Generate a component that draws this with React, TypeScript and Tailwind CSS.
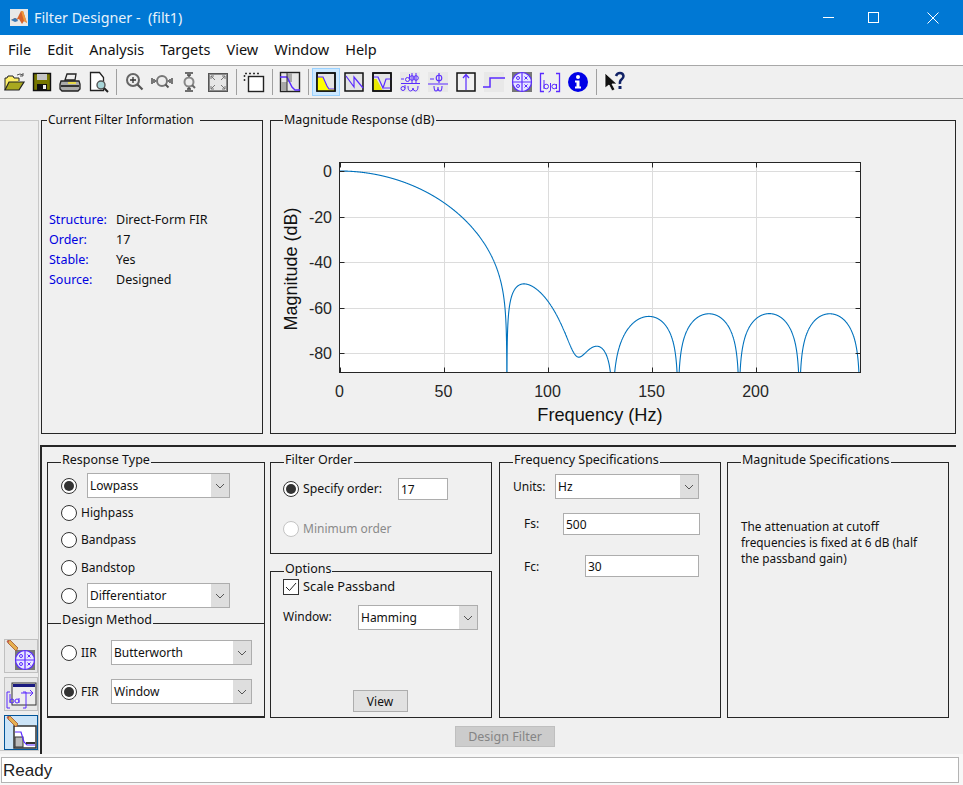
import React from "react";

const Svg = ({ children, w = 24, h = 24 }: { children: React.ReactNode; w?: number; h?: number }) => (
  <svg width={w} height={h} viewBox={`0 0 ${w} ${h}`} className="block shrink-0">{children}</svg>
);

const P = "#5a2bff";

const IOpen = () => (<Svg>
  <path d="M3 20V8h2l1-2h5l1 2h5v3" fill="#fff06a" stroke="#222" strokeWidth="1" />
  <path d="M3 20l4-8h15l-5 8z" fill="#a9a820" stroke="#222" strokeWidth="1.2" />
  <path d="M15 5q3-2 6 0M21 3v3h-3" fill="none" stroke="#555" strokeWidth="1" />
</Svg>);
const ISave = () => (<Svg>
  <path d="M3.500 3.500h17v17h-17z" fill="#777700" stroke="#111" strokeWidth="1.4" />
  <rect x="7" y="4" width="10" height="6" fill="#c5c5c5" />
  <rect x="7" y="14" width="10" height="6" fill="#111" />
  <rect x="13" y="15" width="3" height="4" fill="#eee" />
</Svg>);
const IPrint = () => (<Svg>
  <path d="M7 10l2-6h9l-1 6z" fill="#eee" stroke="#222" strokeWidth="1.300" />
  <path d="M3 11h18l1 3v5l-2 2H4l-2-2v-5z" fill="#aaa" stroke="#222" strokeWidth="1.300" />
  <rect x="3" y="15" width="18" height="2" fill="#333" />
  <rect x="10" y="12" width="8" height="2" fill="#e8d94a" />
</Svg>);
const IPreview = () => (<Svg>
  <path d="M4.500 2.500h9l4 5v13h-13z" fill="#fff" stroke="#222" strokeWidth="1.300" />
  <circle cx="15" cy="15" r="4" fill="#a7d5d8" stroke="#555" strokeWidth="1.4" />
  <path d="M18 18l4 4" stroke="#222" strokeWidth="2" />
</Svg>);
const IZoomIn = () => (<Svg>
  <circle cx="11" cy="10" r="6" fill="#eee" stroke="#666" strokeWidth="2" />
  <path d="M8 10h6M11 7v6" stroke="#333" strokeWidth="1.3" />
  <path d="M15.500 14.500l5 5" stroke="#555" strokeWidth="2.200" />
</Svg>);
const IZoomX = () => (<Svg>
  <circle cx="12" cy="11" r="5" fill="#eee" stroke="#777" strokeWidth="2" />
  <path d="M15.500 14.500l3 3" stroke="#555" strokeWidth="2" />
  <path d="M2 8v6M4 9v4M6 11H5M22 8v6M20 9v4M18 11h1" stroke="#444" strokeWidth="1.4" />
</Svg>);
const IZoomY = () => (<Svg>
  <circle cx="11" cy="12" r="4.500" fill="#eee" stroke="#888" strokeWidth="2" />
  <path d="M14 15l3 3" stroke="#666" strokeWidth="2" />
  <path d="M7 3h8M9 5h4M7 21h8M9 19h4M11 5v2M11 17v2" stroke="#444" strokeWidth="1.3" />
</Svg>);
const IFit = () => (<Svg>
  <rect x="2.500" y="3.500" width="19" height="18" fill="#8a8a8a" stroke="#555" />
  <rect x="4" y="5" width="16" height="15" fill="#e6e6e6" />
  <path d="M5 6l4 4M5 6h3M5 6v3M19 6l-4 4M19 6h-3M19 6v3M5 19l4-4M5 19h3M5 19v-3M19 19l-4-4M19 19h-3M19 19v-3" stroke="#777" strokeWidth="1" fill="none" />
</Svg>);
const INew = () => (<Svg>
  <rect x="6.500" y="6.500" width="15" height="15" fill="#fff" stroke="#222" strokeWidth="1.400" />
  <path d="M2.500 11V3.500H17" fill="none" stroke="#333" strokeWidth="1.500" strokeDasharray="2 2" />
</Svg>);
const ISpec = () => (<Svg>
  <rect x="2.500" y="2.500" width="19" height="19" fill="#e6e6e6" stroke="#222" strokeWidth="1.400" />
  <rect x="3" y="12" width="6" height="9" fill="#a8a8a8" />
  <rect x="9" y="3" width="5" height="9" fill="#a8a8a8" />
  <path d="M2 7h7l5 10 3 3h5" fill="none" stroke={P} strokeWidth="1.400" />
  <path d="M9 3v18" stroke="#333" />
</Svg>);
const IMag = () => (<Svg>
  <rect x="3" y="3" width="18" height="18" fill="#e4e4e4" stroke="#111" strokeWidth="1.500" />
  <path d="M3.500 7h5l4 8 2 4h6v2H3.500z" fill="#ffff00" />
  <path d="M3 7h6l4 9 2 3h6" fill="none" stroke={P} strokeWidth="1.200" />
  <rect x="3" y="3" width="18" height="18" fill="none" stroke="#111" strokeWidth="1.500" />
</Svg>);
const IPhase = () => (<Svg>
  <rect x="3" y="3" width="18" height="18" fill="#e4e4e4" stroke="#111" strokeWidth="1.500" />
  <path d="M4 6l8 11V7l9 11" fill="none" stroke={P} strokeWidth="1.200" />
</Svg>);
const IMagPhase = () => (<Svg>
  <rect x="3" y="3" width="18" height="18" fill="#e4e4e4" stroke="#111" strokeWidth="1.500" />
  <path d="M3.500 9h3l6 11h-9z" fill="#e8e800" />
  <path d="M3 7h5l5 11 3-9h6M14 18h7" fill="none" stroke={P} strokeWidth="1.200" />
  <rect x="3" y="3" width="18" height="18" fill="none" stroke="#111" strokeWidth="1.500" />
</Svg>);
const IGroup = () => (<Svg>
  <rect x="2" y="2" width="20" height="20" fill="#e8e8e8" />
  <path d="M3 9h3M3 13.500h19" stroke={P} strokeWidth="1.200" />
  <path d="M14 3v10M18 3v10" stroke={P} strokeWidth="1" />
  <circle cx="14" cy="8" r="2.300" fill="none" stroke={P} strokeWidth="1" />
  <circle cx="18" cy="8" r="2.300" fill="none" stroke={P} strokeWidth="1" />
  <circle cx="9.500" cy="9.500" r="2" fill="none" stroke={P} strokeWidth="1" />
  <path d="M11.500 9.500V4" stroke={P} strokeWidth="1" />
  <circle cx="5" cy="18.500" r="2" fill="none" stroke={P} strokeWidth="1" />
  <path d="M7 18.500V15M10 16q0 5 2.500 5t2.500-3q0 3 2.500 3T20 16" fill="none" stroke={P} strokeWidth="1" />
</Svg>);
const IPhaseDelay = () => (<Svg>
  <rect x="2" y="2" width="20" height="20" fill="#e8e8e8" />
  <path d="M4 9h4M2 14h20M13 3v10" stroke={P} strokeWidth="1.200" />
  <circle cx="13" cy="8" r="2.800" fill="none" stroke={P} strokeWidth="1.100" />
  <path d="M8 16q0 5 2 5t2-4q0 4 2 4t2-5" fill="none" stroke={P} strokeWidth="1.100" />
</Svg>);
const IImpulse = () => (<Svg>
  <rect x="3" y="3" width="18" height="18" fill="#f0f0f0" stroke="#111" strokeWidth="1.500" />
  <path d="M12 4v16M9 8l3-3.500L15 8" fill="none" stroke={P} strokeWidth="1.200" />
</Svg>);
const IStep = () => (<Svg>
  <rect x="2" y="2" width="20" height="20" fill="#e8e8e8" />
  <path d="M1 17h7V8h15" fill="none" stroke={P} strokeWidth="1.500" />
</Svg>);
const IPoleZero = ({ s = 24 }: { s?: number }) => (<Svg w={s} h={s}>
  <g transform={`scale(${s / 24})`}>
    <rect x="2" y="2" width="20" height="20" fill="#777" />
    <circle cx="12" cy="12" r="9.500" fill="#e8e8ff" stroke={P} strokeWidth="1.200" />
    <path d="M2.500 12h19M12 2.500v19" stroke={P} strokeWidth="1.200" />
    <circle cx="8" cy="8" r="1.500" fill="none" stroke={P} />
    <circle cx="8" cy="16" r="1.500" fill="none" stroke={P} />
    <path d="M14.500 6.500l3 3M17.500 6.500l-3 3M14.500 14.500l3 3M17.500 14.500l-3 3" stroke={P} />
  </g>
</Svg>);
const ICoef = () => (<Svg>
  <path d="M6 3.500H2.500v18H6M18 3.500h3.500v18H18" fill="none" stroke={P} strokeWidth="1.300" />
  <path d="M6 10v9M12.500 13v7q0 2-2 2M18.500 14v5" fill="none" stroke={P} strokeWidth="1" />
  <circle cx="8.200" cy="16.500" r="2.300" fill="none" stroke={P} strokeWidth="1" />
  <circle cx="16.200" cy="16.500" r="2.300" fill="none" stroke={P} strokeWidth="1" />
</Svg>);
const IInfo = () => (<Svg>
  <circle cx="12" cy="12" r="10" fill="#0000e6" />
  <circle cx="12" cy="7" r="2" fill="#fff" />
  <path d="M9 10.500h4.500V16.500H15v2H9v-2h1.500v-4H9z" fill="#fff" />
</Svg>);
const IHelp = () => (<Svg>
  <path d="M3 3l0 15 4-3 3 6 3-1.500-3-5.500h5z" fill="#111" stroke="#fff" strokeWidth="0.800" />
  <path d="M14 6q1-3 4-3t3.500 3q0 2-2 3.500T18 14" fill="none" stroke="#112266" strokeWidth="2.500" />
  <rect x="16.500" y="16" width="3" height="3" fill="#112266" />
</Svg>);

const Btn = ({ children, active }: { children: React.ReactNode; active?: boolean }) => (
  <div className={active
    ? "w-[28px] h-[28px] flex items-center justify-center bg-[#cce8ff] border border-[#99d1ff]"
    : "w-[28px] h-[28px] flex items-center justify-center"}>{children}</div>
);
const Sep = () => <div className="w-px h-[26px] bg-[#a0a0a0] ml-[4px] mr-[3px]" />;

const Group = ({ title, className, legend = "-top-[12px] left-[13px]", children }: { title: string; className: string; legend?: string; children?: React.ReactNode }) => (
  <div className={"relative border border-[#262626] " + className}>
    <span className={"absolute bg-[#f0f0f0] px-px h-[18px] leading-[18px] whitespace-nowrap text-[12.5px] " + legend}>{title}</span>
    {children}
  </div>
);

const Radio = ({ on, disabled }: { on?: boolean; disabled?: boolean }) => (
  <span className={"w-[16px] h-[16px] rounded-full border bg-white flex items-center justify-center shrink-0 " + (disabled ? "border-[#c4c4c4]" : "border-[#333]")}>
    {on && <span className="w-[10px] h-[10px] rounded-full bg-[#333]" />}
  </span>
);

const Select = ({ value, className }: { value: string; className: string }) => (
  <div className={"flex h-[25px] bg-white border border-[#adadad] " + className}>
    <span className="flex-1 pl-[2px] leading-[24px] text-[#111]">{value}</span>
    <span className="w-[18px] bg-[#dedede] flex items-center justify-center">
      <svg width="10" height="6" viewBox="0 0 10 6"><path d="M1 1l4 4 4-4" fill="none" stroke="#555" /></svg>
    </span>
  </div>
);

const Input = ({ value, className }: { value: string; className: string }) => (
  <div className={"bg-white border border-[#adadad] pl-[2px] leading-[21px] text-[#111] " + className}>{value}</div>
);

const L = 68.5, R = 589.5, T = 41.5, B = 251.5;
const SX = 2.0816, SY = 2.28, Y0 = 50;

function curvePath() {
  const N = 17, wn = 30 / 250;
  const h: number[] = [];
  for (let n = 0; n <= N; n++) {
    const t = n - N / 2;
    const w = 0.54 - 0.46 * Math.cos((2 * Math.PI * n) / N);
    h.push((Math.sin(Math.PI * wn * t) / (Math.PI * t)) * w);
  }
  const sum = h.reduce((a, b) => a + b, 0);
  let d = "";
  for (let f = 0; f <= 250; f += 0.05) {
    const om = (2 * Math.PI * f) / 500;
    let re = 0, im = 0;
    h.forEach((v, n) => { re += (v / sum) * Math.cos(om * n); im += (v / sum) * Math.sin(om * n); });
    const db = 20 * Math.log10(Math.max(Math.hypot(re, im), 1e-7));
    const x = L + f * SX;
    const y = Math.min(Y0 - db * SY, 268);
    d += (d ? "L" : "M") + x.toFixed(2) + " " + y.toFixed(2);
  }
  return d;
}

const Chart = () => {
  const xs = [0, 50, 100, 150, 200];
  const ys = [0, -20, -40, -60, -80];
  const X = (f: number) => Math.round(L + f * SX) + 0.5;
  const Y = (d: number) => Math.round(Y0 - d * SY) + 0.5;
  return (
    <svg width="684" height="311" viewBox="0 0 684 311" className="block">
      <defs><clipPath id="ax"><rect x={L} y={T} width={R - L} height={B - T} /></clipPath></defs>
      <rect x={L} y={T} width={R - L} height={B - T} fill="#fff" />
      {xs.slice(1).map((f) => <path key={f} d={`M${X(f)} ${T}V${B}`} stroke="#dcdcdc" />)}
      {ys.map((d) => <path key={d} d={`M${L} ${Y(d)}H${R}`} stroke="#dcdcdc" />)}
      <path d={curvePath()} fill="none" stroke="#0072bd" strokeWidth="1.100" clipPath="url(#ax)" />
      <rect x={L} y={T} width={R - L} height={B - T} fill="none" stroke="#262626" />
      {xs.map((f) => <path key={f} d={`M${X(f)} ${T}v5M${X(f)} ${B}v-5`} stroke="#262626" />)}
      {ys.map((d) => <path key={d} d={`M${L} ${Y(d)}h5M${R} ${Y(d)}h-5`} stroke="#262626" />)}
      <g fontFamily="'Liberation Sans',sans-serif" fontSize="16" fill="#262626">
        {xs.map((f) => <text key={f} x={X(f) - 1} y="276" textAnchor="middle">{f}</text>)}
        {ys.map((d) => <text key={d} x="61" y={Y(d) + 5} textAnchor="end">{d}</text>)}
      </g>
      <text x="329" y="300" fontFamily="'Liberation Sans',sans-serif" fontSize="18.2" fill="#111" textAnchor="middle">Frequency (Hz)</text>
      <text transform="translate(26 148) rotate(-90)" fontFamily="'Liberation Sans',sans-serif" fontSize="18" fill="#111" textAnchor="middle">Magnitude (dB)</text>
    </svg>
  );
};

const SideBtn = ({ active, tall, children }: { active?: boolean; tall?: boolean; children: React.ReactNode }) => (
  <div className={"w-[34px] flex items-end justify-end border " + (tall ? "h-[35px] " : "h-[34px] ") + (active ? "bg-[#cce4f7] border-[#005499]" : "bg-[#e8e8e8] border-[#c0c0c0]")}>{children}</div>
);

const Pencil = () => (
  <svg width="12" height="12" viewBox="0 0 12 12" className="absolute top-[1px] left-[2px]">
    <path d="M1 1l3-1 8 8-2 3-8-8z" fill="#e6b050" stroke="#a05030" strokeWidth="0.8" />
    <path d="M1 1l2 0 0 2z" fill="#cc5555" />
  </svg>
);

export default function App() {
  return (
    <div className="w-[963px] h-[785px] flex flex-col overflow-hidden bg-white [font-family:'Noto_Sans',sans-serif] text-[12px] text-[#111]">
      <div className="h-[35px] shrink-0 bg-[#0078d4] flex items-center text-white">
        <div className="ml-[10px] w-[18px] h-[17px] bg-[#e8e8e8]">
          <svg width="18" height="17" viewBox="0 0 18 17" className="block">
            <path d="M1 11l4-2 2 1 4-8 2 0 4 12-3-2-2 3-3-5-3 1z" fill="#d9622b" />
            <path d="M1 11l4-2 2 1 1 2-3 1z" fill="#3b78b4" />
            <path d="M11 2l2 0 4 12-3-2z" fill="#f09a3c" />
          </svg>
        </div>
        <span className="ml-[6px] text-[14.3px] text-[#e6f2fb] whitespace-pre">Filter Designer -  (filt1)</span>
        <div className="ml-auto flex items-center">
          <div className="w-[45px] h-[35px] flex items-center justify-center"><svg width="11" height="11"><path d="M0 5.500h11" stroke="#fff" /></svg></div>
          <div className="w-[45px] h-[35px] mr-[7px] flex items-center justify-center"><svg width="11" height="11"><rect x=".5" y=".5" width="10" height="10" fill="none" stroke="#fff" /></svg></div>
          <div className="w-[60px] h-[35px] flex items-center justify-center"><svg width="12" height="12"><path d="M.5.5l11 11M11.500.5l-11 11" stroke="#fff" /></svg></div>
        </div>
      </div>

      <div className="h-[30px] shrink-0 flex items-center pl-[8px] gap-[16px] text-[14.5px] bg-white">
        {["File", "Edit", "Analysis", "Targets", "View", "Window", "Help"].map((m) => <span key={m}>{m}</span>)}
      </div>

      <div className="h-[34px] shrink-0 border-y border-[#a8a8a8] bg-[#f0f0f0] flex items-center pb-[1px]">
        <Btn><IOpen /></Btn><Btn><ISave /></Btn><Btn><IPrint /></Btn><Btn><IPreview /></Btn>
        <Sep />
        <Btn><IZoomIn /></Btn><Btn><IZoomX /></Btn><Btn><IZoomY /></Btn><Btn><IFit /></Btn>
        <Sep />
        <Btn><INew /></Btn>
        <Sep />
        <Btn><ISpec /></Btn>
        <Sep />
        <Btn active><IMag /></Btn><Btn><IPhase /></Btn><Btn><IMagPhase /></Btn><Btn><IGroup /></Btn><Btn><IPhaseDelay /></Btn><Btn><IImpulse /></Btn><Btn><IStep /></Btn><Btn><IPoleZero /></Btn><Btn><ICoef /></Btn><Btn><IInfo /></Btn>
        <Sep />
        <Btn><IHelp /></Btn>
      </div>

      <div className="h-[655px] shrink-0 bg-[#f0f0f0] flex">
        <div className="w-[39px] h-[631px] mt-[21px] shrink-0 bg-[#eeeeee] border-t border-r border-b border-[#c8c8c8] flex flex-col justify-end items-end gap-[4px]">
          <div className="relative"><SideBtn><IPoleZero s={24} /></SideBtn><Pencil /></div>
          <div className="relative"><SideBtn>
            <svg width="32" height="30" viewBox="0 0 32 30" className="block">
              <rect x="7" y="3" width="24" height="22" fill="#eee" stroke="#333" />
              <rect x="8" y="4" width="22" height="3" fill="#1a1a80" />
              <path d="M5 12H2v16h3M18 12h3v16h-3" fill="none" stroke={P} />
              <path d="M5 14v9M14 18v5M16 13h12M25 10l3 3-3 3" fill="none" stroke={P} />
              <circle cx="7" cy="21" r="2" fill="none" stroke={P} />
              <circle cx="12" cy="21" r="2" fill="none" stroke={P} />
            </svg>
          </SideBtn></div>
          <div className="relative"><SideBtn active tall>
            <svg width="26" height="26" viewBox="0 0 26 26" className="block">
              <rect x="3" y="3" width="22" height="22" fill="#fff" stroke="#333" strokeWidth="1.500" />
              <rect x="4" y="14" width="8" height="10" fill="#bbb" stroke="#333" />
              <path d="M4 9h6l3 10 3 3h8" fill="none" stroke={P} strokeWidth="1.200" />
              <path d="M15 20h9" stroke="#333" strokeWidth="2" />
            </svg>
          </SideBtn><Pencil /></div>
        </div>

        <div className="flex-1 min-w-0 flex flex-col pl-[2px]">
          <div className="flex gap-[7px] pt-[21px]">
            <Group title="Current Filter Information" legend="-top-[10px] left-[5px] pr-[6px] !text-[12px]" className="w-[222px] h-[314px] pl-[7px] pt-[89px]">
              {[["Structure:", "Direct-Form FIR"], ["Order:", "17"], ["Stable:", "Yes"], ["Source:", "Designed"]].map(([k, v]) => (
                <div key={k} className="flex h-[20px] items-center text-[12.5px]">
                  <span className="w-[67px] text-[#0000e0]">{k}</span><span>{v}</span>
                </div>
              ))}
            </Group>
            <Group title="Magnitude Response (dB)" legend="-top-[10px] left-[12px]" className="w-[686px] h-[314px]">
              <Chart />
            </Group>
          </div>

          <div className="mt-[11px] -ml-[1px] mr-[7px] flex-1 border-t-2 border-l-2 border-[#262626] pl-[5px] pt-[15px]">
            <div className="flex">
              <div className="w-[218px] h-[256px] border border-b-2 border-[#262626] relative shrink-0">
                <span className="absolute -top-[12px] left-[13px] bg-[#f0f0f0] px-px h-[18px] leading-[18px] text-[12.5px]">Response Type</span>
                <div className="h-[161px] border-b border-[#262626] relative pl-[13px] pt-[10px]">
                  <div className="flex items-center h-[25px] gap-[10px]"><Radio on /><Select value="Lowpass" className="w-[143px]" /></div>
                  <div className="flex items-center h-[18px] gap-[4px] mt-[6px]"><Radio /><span>Highpass</span></div>
                  <div className="flex items-center h-[18px] gap-[4px] mt-[9px]"><Radio /><span>Bandpass</span></div>
                  <div className="flex items-center h-[18px] gap-[4px] mt-[10px]"><Radio /><span>Bandstop</span></div>
                  <div className="flex items-center h-[25px] gap-[10px] mt-[6px]"><Radio /><Select value="Differentiator" className="w-[143px]" /></div>
                  <span className="absolute -bottom-[6px] left-[13px] bg-[#f0f0f0] px-px h-[18px] leading-[18px] text-[12.5px]">Design Method</span>
                </div>
                <div className="pl-[13px] pt-[16px]">
                  <div className="flex items-center h-[25px]"><Radio /><span className="w-[34px] pl-[4px]">IIR</span><Select value="Butterworth" className="w-[141px]" /></div>
                  <div className="flex items-center h-[25px] mt-[14px]"><Radio on /><span className="w-[34px] pl-[4px]">FIR</span><Select value="Window" className="w-[141px]" /></div>
                </div>
              </div>

              <div className="w-[222px] ml-[5px] flex flex-col shrink-0">
                <Group title="Filter Order" className="h-[92px] pl-[12px] pt-[15px]">
                  <div className="flex items-center h-[22px]"><Radio on /><span className="ml-[4px] w-[95px] text-[12.3px]">Specify order:</span><Input value="17" className="w-[50px] h-[22px]" /></div>
                  <div className="flex items-center h-[18px] mt-[20px] text-[#8a8a8a]"><Radio disabled /><span className="ml-[4px]">Minimum order</span></div>
                </Group>
                <Group title="Options" className="mt-[17px] h-[147px] pl-[12px] pt-[7px]">
                  <div className="flex items-center h-[16px]">
                    <span className="w-[16px] h-[16px] bg-white border border-[#333] flex items-center justify-center">
                      <svg width="12" height="10" viewBox="0 0 12 10"><path d="M1 5l3.500 3.500L11 1" fill="none" stroke="#222" /></svg>
                    </span>
                    <span className="ml-[4px] text-[12.8px]">Scale Passband</span>
                  </div>
                  <div className="flex items-center mt-[10px] h-[25px]"><span className="w-[75px] -mt-[2px]">Window:</span><Select value="Hamming" className="w-[120px]" /></div>
                  <div className="flex justify-center mt-[60px] pr-[14px]">
                    <div className="w-[55px] h-[22px] bg-[#e1e1e1] border border-[#adadad] text-center leading-[21px]">View</div>
                  </div>
                </Group>
              </div>

              <Group title="Frequency Specifications" className="w-[222px] h-[256px] ml-[7px] shrink-0 pl-[13px] pt-[11px]">
                <div className="flex items-center h-[25px]"><span className="w-[42px]">Units:</span><Select value="Hz" className="w-[144px]" /></div>
                <div className="flex items-center h-[22px] mt-[14px]"><span className="w-[50px] pl-[11px]">Fs:</span><Input value="500" className="w-[137px] h-[22px]" /></div>
                <div className="flex items-center h-[22px] mt-[20px]"><span className="w-[72px] pl-[11px] pt-[1px]">Fc:</span><Input value="30" className="w-[114px] h-[22px]" /></div>
              </Group>

              <Group title="Magnitude Specifications" className="w-[222px] h-[256px] ml-[6px] shrink-0 pl-[13px] pt-[55px]">
                <p className="leading-[16px] text-[11.8px]">The attenuation at cutoff<br />frequencies is fixed at 6 dB (half<br />the passband gain)</p>
              </Group>
            </div>
            <div className="mt-[8px] ml-[408px]">
              <div className="w-[100px] h-[21px] bg-[#cccccc] border border-[#bfbfbf] text-[#858585] text-center leading-[19px] text-[12.5px]">Design Filter</div>
            </div>
          </div>
        </div>
      </div>

      <div className="flex-1 bg-[#f7f7f7] pt-[3px] pl-px pr-[4px]">
        <div className="h-[26px] bg-white border border-[#b4b4b4] pl-[1px] text-[17px] leading-[26px] text-[#222] [font-family:'Liberation_Sans',sans-serif]">Ready</div>
      </div>
    </div>
  );
}
